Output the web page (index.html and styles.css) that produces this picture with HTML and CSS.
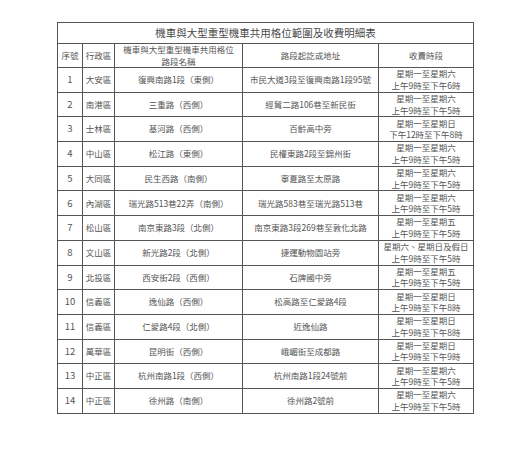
FILE: index.html
```html
<!DOCTYPE html>
<html lang="zh-Hant">
<head>
<meta charset="utf-8">
<link rel="stylesheet" href="styles.css">
</head>
<body>
<table class="fee-table">
  <colgroup>
    <col class="c-no"><col class="c-dist"><col class="c-road"><col class="c-range"><col class="c-time">
  </colgroup>
  <thead>
    <tr class="title-row"><th colspan="5" class="title">機車與大型重型機車共用格位範圍及收費明細表</th></tr>
    <tr class="head-row">
      <th>序號</th><th>行政區</th><th>機車與大型重型機車共用格位<br>路段名稱</th><th>路段起訖或地址</th><th>收費時段</th>
    </tr>
  </thead>
  <tbody>
    <tr><td>1</td><td>大安區</td><td>復興南路1段（東側）</td><td>市民大道3段至復興南路1段95號</td><td>星期一至星期六<br>上午9時至下午6時</td></tr>
    <tr><td>2</td><td>南港區</td><td>三重路（西側）</td><td>經貿二路106巷至新民街</td><td>星期一至星期六<br>上午9時至下午5時</td></tr>
    <tr><td>3</td><td>士林區</td><td>基河路（西側）</td><td>百齡高中旁</td><td>星期一至星期日<br>下午12時至下午8時</td></tr>
    <tr><td>4</td><td>中山區</td><td>松江路（東側）</td><td>民權東路2段至錦州街</td><td>星期一至星期六<br>上午9時至下午5時</td></tr>
    <tr><td>5</td><td>大同區</td><td>民生西路（南側）</td><td>寧夏路至太原路</td><td>星期一至星期六<br>上午9時至下午5時</td></tr>
    <tr><td>6</td><td>內湖區</td><td>瑞光路513巷22弄（南側）</td><td>瑞光路583巷至瑞光路513巷</td><td>星期一至星期六<br>上午9時至下午5時</td></tr>
    <tr><td>7</td><td>松山區</td><td>南京東路3段（北側）</td><td>南京東路3段269巷至敦化北路</td><td>星期一至星期五<br>上午9時至下午5時</td></tr>
    <tr><td>8</td><td>文山區</td><td>新光路2段（北側）</td><td>捷運動物園站旁</td><td>星期六、星期日及假日<br>上午9時至下午5時</td></tr>
    <tr><td>9</td><td>北投區</td><td>西安街2段（西側）</td><td>石牌國中旁</td><td>星期一至星期五<br>上午9時至下午5時</td></tr>
    <tr><td>10</td><td>信義區</td><td>逸仙路（西側）</td><td>松高路至仁愛路4段</td><td>星期一至星期日<br>上午9時至下午8時</td></tr>
    <tr><td>11</td><td>信義區</td><td>仁愛路4段（北側）</td><td>近逸仙路</td><td>星期一至星期日<br>上午9時至下午8時</td></tr>
    <tr><td>12</td><td>萬華區</td><td>昆明街（西側）</td><td>峨嵋街至成都路</td><td>星期一至星期日<br>上午9時至下午9時</td></tr>
    <tr><td>13</td><td>中正區</td><td>杭州南路1段（西側）</td><td>杭州南路1段24號前</td><td>星期一至星期六<br>上午9時至下午5時</td></tr>
    <tr><td>14</td><td>中正區</td><td>徐州路（南側）</td><td>徐州路2號前</td><td>星期一至星期六<br>上午9時至下午5時</td></tr>
  </tbody>
</table>
</body>
</html>
```
FILE: styles.css
```css
html, body {
  margin: 0;
  padding: 0;
  background: #ffffff;
}
body {
  padding: 22px 0 0 57px;
  font-family: "Noto Sans CJK TC", "Noto Sans", sans-serif;
  color: #555555;
}
.fee-table {
  border-collapse: collapse;
  table-layout: fixed;
  width: 416px;
  font-size: 8.5px;
  line-height: 11.5px;
}
.c-no { width: 25px; }
.c-dist { width: 32px; }
.c-road { width: 128px; }
.c-range { width: 136px; }
.c-time { width: 95px; }
.fee-table th,
.fee-table td {
  border: 1px solid #555555;
  padding: 0;
  text-align: center;
  vertical-align: middle;
  font-weight: normal;
  white-space: nowrap;
  overflow: hidden;
}
.title-row th {
  height: 20px;
  font-size: 10.5px;
  color: #4a4a4a;
}
.head-row th {
  height: 22px;
}
.fee-table tbody tr {
  height: 24.7px;
}
.fee-table tbody td {
  height: 23.7px;
  box-sizing: border-box;
}
.fee-table tbody td:first-child {
  font-size: 9.5px;
}
```
